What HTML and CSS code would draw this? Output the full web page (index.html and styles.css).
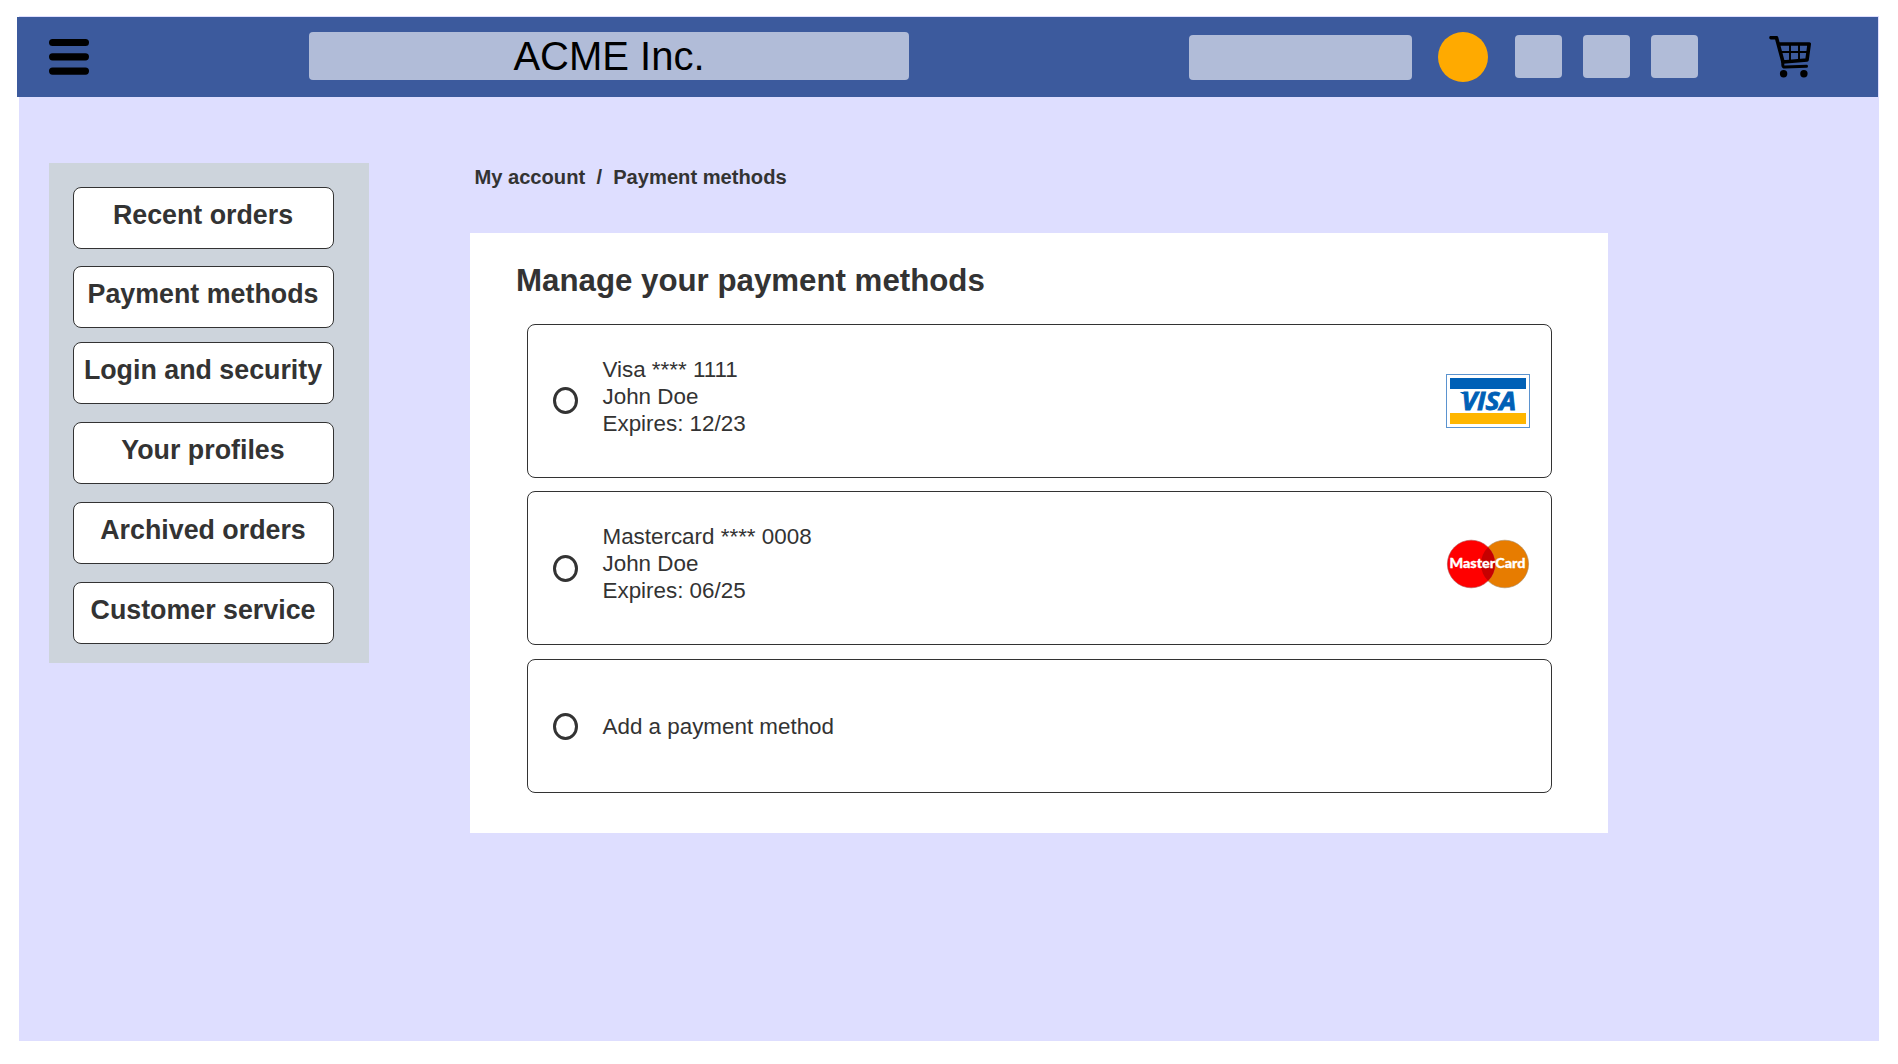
FILE: index.html
```html
<!DOCTYPE html>
<html lang="en">
<head>
<meta charset="utf-8">
<title>ACME Inc. - Payment methods</title>
<link rel="stylesheet" href="styles.css">
</head>
<body>
<div class="page">
  <header class="topbar">
    <button class="menu" aria-label="Menu"><svg width="40" height="36" viewBox="0 0 40 36"><rect width="40" height="7" rx="3.5"/><rect y="14.2" width="40" height="7.2" rx="3.6"/><rect y="28.4" width="40" height="7.3" rx="3.6"/></svg></button>
    <div class="brand">ACME Inc.</div>
    <div class="search"></div>
    <div class="avatar"></div>
    <div class="tools"><span class="tool"></span><span class="tool"></span><span class="tool"></span></div>
    <svg class="cart" width="42" height="42" viewBox="0 0 42 42" fill="none" stroke="#000" stroke-linecap="round" stroke-linejoin="round">
      <path d="M2 1.700H7.500L14 26L38 24L40.200 8H10" stroke-width="3.600"/>
      <path d="M13.800 26.200V29Q13.800 31.200 16 31.100L37.500 30.300" stroke-width="3"/>
      <path d="M12 16H39M21 8V25M30 8V24" stroke-width="1.900"/>
      <g fill="#000" stroke="none"><circle cx="14.600" cy="37.700" r="3.700"/><circle cx="34.900" cy="37.700" r="3.700"/></g>
    </svg>
  </header>
  <div class="body">
    <nav class="sidebar">
      <a class="nav-item">Recent orders</a>
      <a class="nav-item">Payment methods</a>
      <a class="nav-item nav-item-raised">Login and security</a>
      <a class="nav-item">Your profiles</a>
      <a class="nav-item">Archived orders</a>
      <a class="nav-item">Customer service</a>
    </nav>
    <main class="content">
      <div class="breadcrumb">My account&nbsp; /&nbsp; Payment methods</div>
      <section class="panel">
        <h1 class="title">Manage your payment methods</h1>
        <div class="methods">
          <div class="method">
            <span class="radio"></span>
            <div class="details">Visa **** 1111<br>John Doe<br>Expires: 12/23</div>
            <svg class="logo" width="84" height="54" viewBox="0 0 84 54">
              <rect x=".5" y=".5" width="83" height="53" fill="#fff" stroke="#5b93cf"/>
              <rect x="4" y="4" width="76" height="11" fill="#0060b6"/>
              <rect x="4" y="39" width="76" height="11" fill="#ffb600"/>
              <path d="M13.800 18H20V20H16.500Z" fill="#0060b6"/>
              <text class="visa" x="15.500" y="36" textLength="54.500" lengthAdjust="spacingAndGlyphs">VISA</text>
            </svg>
          </div>
          <div class="method method-mc">
            <span class="radio"></span>
            <div class="details">Mastercard **** 0008<br>John Doe<br>Expires: 06/25</div>
            <svg class="logo logo-mc" width="84" height="50" viewBox="0 0 84 50">
              <circle cx="58.800" cy="25" r="23.800" fill="#e77c00" stroke="#a98a62" stroke-width=".6"/>
              <circle cx="25.200" cy="25" r="23.800" fill="#ff0000" stroke="#b04a4a" stroke-width=".6"/>
              <path d="M42 8.140A23.800 23.800 0 0 1 42 41.860A23.800 23.800 0 0 1 42 8.140Z" fill="#c60000"/>
              <text class="mc" x="3.500" y="29" textLength="76" lengthAdjust="spacingAndGlyphs">MasterCard</text>
            </svg>
          </div>
          <div class="method method-add">
            <span class="radio"></span>
            <div class="details">Add a payment method</div>
          </div>
        </div>
      </section>
    </main>
  </div>
</div>
</body>
</html>
```
FILE: styles.css
```css
* { box-sizing: border-box; }
body {
  margin: 0;
  background: #fff;
  color: #333;
  font-family: "Liberation Sans", Arial, sans-serif;
}
.page {
  width: 1860px;
  height: 1025px;
  margin: 16px 0 0 19px;
  padding-top: 1px;
  background: #dedeff;
}
.topbar {
  display: flex;
  align-items: flex-start;
  width: 1861px;
  height: 80px;
  margin-left: -2px;
  padding: 15px 0 0 32px;
  background: #3c5a9d;
}
.menu {
  display: block;
  margin-top: 7px;
  padding: 0;
  border: 0;
  background: none;
  line-height: 0;
}
.brand {
  width: 600px;
  height: 47.6px;
  margin-left: 220px;
  border-radius: 4px;
  background: #b1bcd8;
  color: #000;
  font-size: 40px;
  line-height: 48px;
  text-align: center;
}
.search {
  width: 223px;
  height: 44.6px;
  margin: 3px 0 0 280px;
  border-radius: 4px;
  background: #b1bcd8;
}
.avatar {
  width: 50px;
  height: 50px;
  margin: .3px 0 0 26px;
  border-radius: 50%;
  background: #fa0;
}
.tools {
  display: flex;
  gap: 21px;
  margin: 3px 0 0 27px;
}
.tool {
  width: 47px;
  height: 42.6px;
  border-radius: 4px;
  background: #b1bcd8;
}
.cart { margin: 4px 0 0 71px; }
.body {
  display: flex;
  align-items: flex-start;
  gap: 101px;
  padding: 66px 0 0 30px;
}
.sidebar {
  display: flex;
  flex-direction: column;
  gap: 18px;
  width: 320px;
  height: 500px;
  padding: 24px 35px 0 24px;
  background: #cdd4dc;
}
.sidebar .nav-item:first-child { margin-bottom: -1px; }
.nav-item {
  flex: none;
  height: 62px;
  border: 1px solid #333;
  border-radius: 8px;
  background: #fff;
  font-size: 26.8px;
  font-weight: 700;
  line-height: 54px;
  text-align: center;
  text-indent: -1px;
  white-space: nowrap;
}
.sidebar .nav-item-raised { margin-top: -4px; }
.breadcrumb {
  height: 70px;
  padding: 2px 0 0 4.4px;
  font-size: 20.15px;
  font-weight: 700;
  line-height: 24px;
}
.panel {
  width: 1138px;
  height: 600px;
  padding: 30px 56px 0 57px;
  background: #fff;
}
.title {
  height: 61px;
  margin: 0 0 0 -11px;
  font-size: 31.25px;
  line-height: 36px;
}
.methods {
  display: flex;
  flex-direction: column;
  gap: 13.6px;
}
.method {
  display: flex;
  align-items: center;
  height: 153.7px;
  padding: 0 21px 0 25px;
  border: 1px solid #333;
  border-radius: 8px;
}
.method-add { height: 134px; }
.radio {
  width: 25px;
  height: 27px;
  border: 3px solid #333;
  border-radius: 50%;
}
.method-add .radio { margin-top: 1px; }
.details {
  margin: -8px 0 0 24.5px;
  font-size: 22.4px;
  line-height: 27px;
}
.method-mc .details { margin-top: -10px; }
.method-add .details { margin-top: 2px; }
.logo { margin-left: auto; }
.logo-mc { margin-top: -8px; }
.visa {
  fill: #0060b6;
  stroke: #0060b6;
  stroke-width: .9px;
  font: italic 700 25.5px "Open Sans", sans-serif;
}
.mc {
  fill: #fff;
  stroke: #fff;
  stroke-width: .3px;
  font: 900 13.8px Lato, sans-serif;
}
```
